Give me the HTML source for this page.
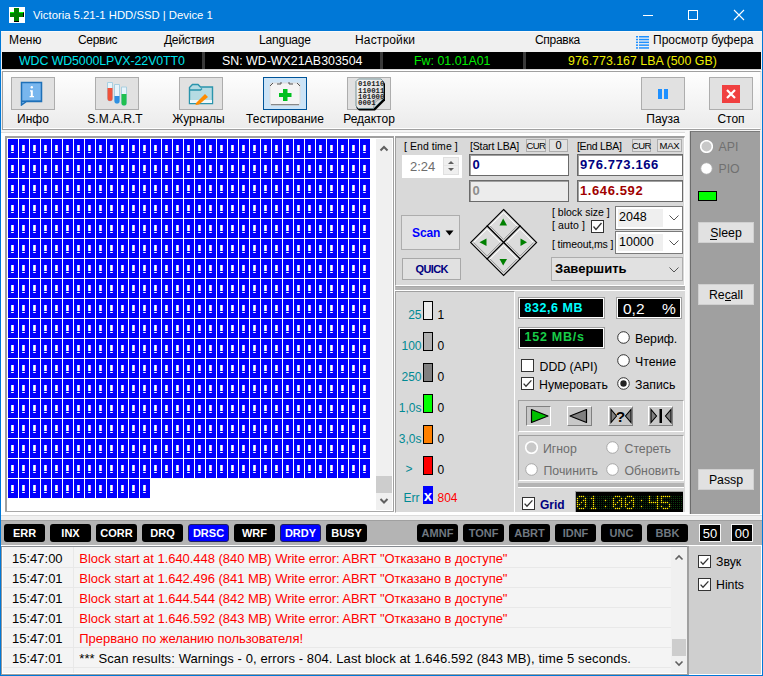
<!DOCTYPE html>
<html><head><meta charset="utf-8">
<style>
*{box-sizing:border-box;margin:0;padding:0}
html,body{width:763px;height:676px;overflow:hidden;background:#f0f0f0;font-family:"Liberation Sans",sans-serif;font-size:12px;color:#000;position:relative}
.a{position:absolute}
svg.a{display:block}
.t{position:absolute;white-space:pre;line-height:1}
.tb{position:absolute;top:77px;width:44px;height:33px;background:#e1e1e1;border:1px solid #adadad}
.btn{position:absolute;background:#e1e1e1;border:1px solid #adadad}
.sb{position:absolute;top:524px;width:41px;height:18px;background:#000;border-radius:3px;color:#fff;font-weight:bold;font-size:11px;line-height:18px;text-align:center}
</style></head><body>

<div class="a" style="left:0px;top:0px;width:763px;height:31px;background:#0078d7"></div>
<svg class="a" style="left:9px;top:7px" width="16" height="16" viewBox="0 0 16 16">
<rect width="16" height="16" fill="#fff"/>
<rect x="5" y="1" width="5" height="14" fill="#008000"/>
<rect x="1" y="5" width="14" height="5" fill="#008000"/>
<rect x="1" y="5" width="4" height="1" fill="#00ff00"/><rect x="10" y="5" width="4" height="1" fill="#00ff00"/>
<rect x="5" y="14" width="5" height="1" fill="#000"/><rect x="14" y="6" width="1" height="4" fill="#000"/>
</svg>
<div class="t" style="left:33px;top:10.43px;font-size:11.3px;color:#fff;">Victoria 5.21-1 HDD/SSD | Device 1</div>
<div class="a" style="left:643px;top:15px;width:10px;height:1px;background:#fff"></div>
<div class="a" style="left:688px;top:10px;width:10px;height:10px;border:1px solid #fff"></div>
<svg class="a" style="left:733px;top:9px" width="12" height="12" viewBox="0 0 12 12"><path d="M1 1L11 11M11 1L1 11" stroke="#fff" stroke-width="1.1"/></svg>
<div class="a" style="left:1px;top:31px;width:761px;height:21px;background:#f0f0f0;border-top:1px solid #fafafa"></div>
<div class="t" style="left:9px;top:33.84px;font-size:12px;">Меню</div>
<div class="t" style="left:78px;top:33.84px;font-size:12px;letter-spacing:-0.3px">Сервис</div>
<div class="t" style="left:164px;top:33.84px;font-size:12px;letter-spacing:-0.3px">Действия</div>
<div class="t" style="left:259px;top:33.84px;font-size:12px;letter-spacing:-0.2px">Language</div>
<div class="t" style="left:355px;top:33.84px;font-size:12px;letter-spacing:0.15px">Настройки</div>
<div class="t" style="left:535px;top:33.84px;font-size:12px;letter-spacing:-0.3px">Справка</div>
<div class="t" style="left:653px;top:33.84px;font-size:12px;">Просмотр буфера</div>
<svg class="a" style="left:636px;top:36px" width="13" height="13" viewBox="0 0 13 13" fill="#1e90ff"><rect x="0" y="0.0" width="2" height="1.5"/><rect x="3" y="0.0" width="10" height="1.5"/><rect x="0" y="2.8" width="2" height="1.5"/><rect x="3" y="2.8" width="10" height="1.5"/><rect x="0" y="5.6" width="2" height="1.5"/><rect x="3" y="5.6" width="10" height="1.5"/><rect x="0" y="8.399999999999999" width="2" height="1.5"/><rect x="3" y="8.399999999999999" width="10" height="1.5"/><rect x="0" y="11.2" width="2" height="1.5"/><rect x="3" y="11.2" width="10" height="1.5"/></svg>
<div class="a" style="left:2px;top:52px;width:759px;height:17px;background:#000"></div>
<div class="a" style="left:202px;top:52px;width:3px;height:17px;background:#3a3a3a"></div>
<div class="a" style="left:380px;top:52px;width:3px;height:17px;background:#3a3a3a"></div>
<div class="a" style="left:523px;top:52px;width:3px;height:17px;background:#3a3a3a"></div>
<div class="a" style="left:1px;top:69px;width:761px;height:1px;background:#d8d8d8"></div>
<div class="a" style="left:1px;top:70px;width:761px;height:1px;background:#fff"></div>
<div class="t" style="left:19px;top:54.50px;font-size:12.4px;color:#00e5ee;letter-spacing:-0.1px">WDC WD5000LPVX-22V0TT0</div>
<div class="t" style="left:222px;top:54.50px;font-size:12.4px;color:#fff;">SN: WD-WX21AB303504</div>
<div class="t" style="left:414px;top:54.50px;font-size:12.4px;color:#00ee00;">Fw: 01.01A01</div>
<div class="t" style="left:568px;top:54.50px;font-size:12.4px;color:#eeee00;">976.773.167 LBA (500 GB)</div>
<div class="a" style="left:2px;top:71px;width:759px;height:59px;border:1px solid #a0a0a0;border-right-color:#e8e8e8;border-bottom-color:#a0a0a0;background:linear-gradient(#fefefe,#ebebeb);box-shadow:inset 0 -1px 0 #fff"></div>
<div class="a" style="left:1px;top:130px;width:761px;height:2px;background:#f4f4f4"></div>
<div class="a" style="left:1px;top:132px;width:761px;height:1px;background:#dcdcdc"></div>
<div class="a" style="left:1px;top:133px;width:761px;height:3px;background:#fff"></div>
<div class="a" style="left:11px;top:77px;width:44px;height:33px;background:#e1e1e1;border:1px solid #adadad"></div>
<div class="a" style="left:95px;top:77px;width:44px;height:33px;background:#e1e1e1;border:1px solid #adadad"></div>
<div class="a" style="left:179px;top:77px;width:44px;height:33px;background:#e1e1e1;border:1px solid #adadad"></div>
<div class="a" style="left:347px;top:77px;width:44px;height:33px;background:#e1e1e1;border:1px solid #adadad"></div>
<div class="a" style="left:641px;top:77px;width:44px;height:33px;background:#e1e1e1;border:1px solid #adadad"></div>
<div class="a" style="left:709px;top:77px;width:44px;height:33px;background:#e1e1e1;border:1px solid #adadad"></div>
<div class="a" style="left:263px;top:77px;width:44px;height:33px;background:#cce4f7;border:1px solid #005499"></div>
<div class="t" style="left:-167px;width:400px;text-align:center;top:113.34px;font-size:12px;">Инфо</div>
<div class="t" style="left:-85px;width:400px;text-align:center;top:113.34px;font-size:12px;">S.M.A.R.T</div>
<div class="t" style="left:-1.5px;width:400px;text-align:center;top:113.34px;font-size:12px;">Журналы</div>
<div class="t" style="left:85px;width:400px;text-align:center;top:113.34px;font-size:12px;">Тестирование</div>
<div class="t" style="left:169px;width:400px;text-align:center;top:113.34px;font-size:12px;">Редактор</div>
<div class="t" style="left:463px;width:400px;text-align:center;top:113.34px;font-size:12px;">Пауза</div>
<div class="t" style="left:531px;width:400px;text-align:center;top:113.34px;font-size:12px;">Стоп</div>
<svg class="a" style="left:20px;top:81px" width="24" height="25" viewBox="0 0 24 25">
<path d="M1.5 1.5H21.5V20.5H6.5L1.5 24Z" fill="#78b6ee" stroke="#1e70b8" stroke-width="1.5"/>
<rect x="1" y="19.5" width="21" height="1.5" fill="#1e70b8"/>
<circle cx="11.8" cy="6.3" r="1.2" fill="#fff"/><path d="M10 9.3H12.8V15H14V16.3H9.6V15H10.8V10.5H10Z" fill="#fff"/>
</svg>
<svg class="a" style="left:105px;top:81px" width="24" height="26" viewBox="0 0 24 26">
<path d="M2.5 1.5H7.5V17.5A2.5 2.5 0 0 1 2.5 17.5Z" fill="#e8f4fb" stroke="#a8cfe0" stroke-width="1"/>
<path d="M2.5 7H7.5V17.5A2.5 2.5 0 0 1 2.5 17.5Z" fill="#f0523a"/>
<path d="M9.5 3.5H14.5V20A2.5 2.5 0 0 1 9.5 20Z" fill="#e8f4fb" stroke="#a8cfe0" stroke-width="1"/>
<path d="M9.5 15H14.5V20A2.5 2.5 0 0 1 9.5 20Z" fill="#2f8fe0"/>
<path d="M16.5 6H21.5V22A2.5 2.5 0 0 1 16.5 22Z" fill="#e8f4fb" stroke="#a8cfe0" stroke-width="1"/>
<path d="M16.5 13H21.5V22A2.5 2.5 0 0 1 16.5 22Z" fill="#20c050"/>
</svg>
<svg class="a" style="left:188px;top:83px" width="26" height="23" viewBox="0 0 26 23">
<path d="M1.5 4.5L4.5 1.5H10L12.5 4H24.5V20.5H1.5Z" fill="#b5dbe3" stroke="#2a94ac" stroke-width="1.4"/>
<path d="M1.5 7H12.5L14 5.5" fill="none" stroke="#2a94ac" stroke-width="1.4"/>
<rect x="2" y="17" width="22" height="3" fill="#eef8fa"/>
<path d="M8 20L17 11L20 14L11 21.5L7.5 22Z" fill="#ff8c00"/>
</svg>
<svg class="a" style="left:269px;top:81px" width="32" height="25" viewBox="0 0 32 25">
<rect x="1" y="2" width="30" height="22" rx="2" fill="#f4f4f4" stroke="#dcdcdc"/>
<path d="M1 5L4 2M28 2L31 5M8 3H12V1M20 1V3H24" stroke="#555" stroke-width="1" fill="none"/>
<rect x="2" y="23" width="28" height="1.2" fill="#888"/>
<rect x="14" y="8" width="4.5" height="12" fill="#00c020"/><rect x="10" y="12" width="12.5" height="4" fill="#00c020"/>
</svg>
<svg class="a" style="left:355px;top:78px" width="32" height="33" viewBox="0 0 32 33">
<defs><linearGradient id="pg" x1="0" y1="0" x2="1" y2="1"><stop offset="0" stop-color="#f6f6f6"/><stop offset="1" stop-color="#d4d4d4"/></linearGradient></defs>
<path d="M4 2.5H27L30 5.5V22.5L20 32.5H4L1.5 30V5Z" fill="#000"/>
<path d="M3.5 1H26L28.5 3.5V20.5L18.5 30.5H3.5L1 28V3.5Z" fill="url(#pg)" stroke="#6a8a90" stroke-width="0.9"/>
<path d="M18.5 30.5C19 26 20 22 28.5 20.5C25 21.5 22 21 20 21.5Z" fill="#c8c8c8" stroke="#888" stroke-width="0.5"/>
<g font-family="Liberation Mono" font-size="7.3" font-weight="bold" fill="#202020"><text x="3" y="8.2">010110</text><text x="3" y="14.6">110011</text><text x="3" y="21">101000</text><text x="3" y="27.4">0001</text></g>
</svg>
<div class="a" style="left:658px;top:89px;width:4px;height:10px;background:#1e90ff"></div>
<div class="a" style="left:664px;top:89px;width:4px;height:10px;background:#1e90ff"></div>
<div class="a" style="left:722px;top:85px;width:18px;height:18px;background:#f04040"></div>
<svg class="a" style="left:722px;top:85px" width="18" height="18" viewBox="0 0 18 18"><path d="M5 5L13 13M13 5L5 13" stroke="#fff" stroke-width="2.2"/></svg>
<div class="a" style="left:1px;top:133px;width:4px;height:379px;background:#fff"></div>
<div class="a" style="left:5px;top:136px;width:389px;height:376px;background:#fff;border-top:2px solid #a0a0a0;border-left:2px solid #a0a0a0"></div>
<div class="a" style="left:393px;top:136px;width:1px;height:376px;background:#a0a0a0"></div>
<div class="a" style="left:5px;top:511px;width:389px;height:1px;background:#a8a8a8"></div>
<svg class="a" style="left:8px;top:139px" width="363" height="360" viewBox="0 0 363 360">
<defs><pattern id="blk" width="11" height="20" patternUnits="userSpaceOnUse">
<rect width="10" height="19" fill="#0000ff"/>
<rect x="3" y="6" width="1" height="6" fill="#9ff"/><rect x="4" y="6" width="1" height="6" fill="#fff"/><rect x="5" y="6" width="1" height="6" fill="#f9f"/>
<rect x="3" y="13" width="1" height="1" fill="#9ff"/><rect x="4" y="13" width="1" height="1" fill="#fff"/><rect x="5" y="13" width="1" height="1" fill="#f9f"/>
</pattern></defs>
<rect width="363" height="340" fill="url(#blk)"/>
<rect y="340" width="143" height="20" fill="url(#blk)"/>
</svg>
<div class="a" style="left:376px;top:139px;width:16px;height:371px;background:#f0f0f0"></div>
<div class="a" style="left:376px;top:476px;width:16px;height:17px;background:#cdcdcd"></div>
<svg class="a" style="left:376px;top:139px" width="16" height="371" viewBox="0 0 16 371"><path d="M4.5 11.5L8 8L11.5 11.5" stroke="#606060" stroke-width="2" fill="none"/><path d="M4.5 360L8 363.5L11.5 360" stroke="#606060" stroke-width="2" fill="none"/></svg>
<div class="a" style="left:395px;top:136px;width:290px;height:150px;background:#d9d9d9;border-top:2px solid #a0a0a0;border-left:1px solid #a0a0a0;border-bottom:1px solid #fff;border-right:1px solid #fff"></div>
<div class="a" style="left:685px;top:131px;width:4px;height:383px;background:#f8f8f8"></div>
<div class="a" style="left:394px;top:136px;width:1px;height:377px;background:#fff"></div>
<div class="t" style="left:404px;top:141.11px;font-size:10.5px;letter-spacing:0.05px">[ End time ]</div>
<div class="a" style="left:402px;top:155px;width:60px;height:23px;background:#fff"></div>
<div class="a" style="left:443px;top:157px;width:16px;height:18px;background:#e6e6e6;border:1px solid #e0e0e0"></div>
<div class="a" style="left:444px;top:158px;width:14px;height:7px;background:#efefef"></div>
<div class="a" style="left:444px;top:166px;width:14px;height:8px;background:#efefef"></div>
<svg class="a" style="left:443px;top:157px" width="16" height="18" viewBox="0 0 16 18"><path d="M5 7H11L8 4Z" fill="#606060"/><path d="M5 11H11L8 14Z" fill="#606060"/></svg>
<div class="t" style="left:410px;top:160.00px;font-size:13px;color:#6d6d6d;">2:24</div>
<div class="t" style="left:470px;top:141.11px;font-size:10.5px;letter-spacing:-0.15px">[Start LBA]</div>
<div class="t" style="left:577px;top:141.11px;font-size:10.5px;letter-spacing:-0.3px">[End LBA]</div>
<div class="a" style="left:526px;top:139px;width:20px;height:13px;background:#e1e1e1;border:1px solid #adadad"></div>
<div class="t" style="left:336.0px;width:400px;text-align:center;top:141.46px;font-size:9.5px;letter-spacing:-0.6px">CUR</div>
<div class="a" style="left:549px;top:139px;width:19px;height:13px;background:#e1e1e1;border:1px solid #adadad"></div>
<div class="t" style="left:358.5px;width:400px;text-align:center;top:140.19px;font-size:11px;">0</div>
<div class="a" style="left:632px;top:139px;width:19px;height:13px;background:#e1e1e1;border:1px solid #adadad"></div>
<div class="t" style="left:441.5px;width:400px;text-align:center;top:141.46px;font-size:9.5px;letter-spacing:-0.6px">CUR</div>
<div class="a" style="left:657px;top:139px;width:25px;height:13px;background:#e1e1e1;border:1px solid #adadad"></div>
<div class="t" style="left:469.5px;width:400px;text-align:center;top:141.46px;font-size:9.5px;letter-spacing:-0.2px">MAX</div>
<div class="a" style="left:469px;top:154px;width:100px;height:22px;background:#fff;border:1px solid #6a6a6a;box-shadow:inset 1px 1px 0 #a0a0a0"></div>
<div class="a" style="left:469px;top:180px;width:100px;height:22px;background:#ececec;border:1px solid #6a6a6a;box-shadow:inset 1px 1px 0 #a0a0a0"></div>
<div class="a" style="left:577px;top:154px;width:106px;height:22px;background:#fff;border:1px solid #6a6a6a;box-shadow:inset 1px 1px 0 #a0a0a0"></div>
<div class="a" style="left:577px;top:180px;width:106px;height:22px;background:#fff;border:1px solid #6a6a6a;box-shadow:inset 1px 1px 0 #a0a0a0"></div>
<div class="t" style="left:472.5px;top:158.00px;font-size:13px;color:#000080;font-weight:700;">0</div>
<div class="t" style="left:472.5px;top:184.00px;font-size:13px;color:#8e8e8e;font-weight:700;">0</div>
<div class="t" style="left:580px;top:158.00px;font-size:13px;color:#000080;font-weight:700;letter-spacing:0.6px">976.773.166</div>
<div class="t" style="left:580px;top:184.00px;font-size:13px;color:#a00000;font-weight:700;letter-spacing:0.6px">1.646.592</div>
<div class="a" style="left:401px;top:215px;width:59px;height:35px;background:#e1e1e1;border:1px solid #adadad"></div>
<div class="t" style="left:412px;top:227.44px;font-size:12px;color:#0000ff;font-weight:700;letter-spacing:-0.1px">Scan</div>
<svg class="a" style="left:445px;top:230px" width="9" height="6" viewBox="0 0 9 6"><path d="M0.5 0.5H8.5L4.5 5.5Z" fill="#000"/></svg>
<div class="a" style="left:402px;top:258px;width:59px;height:22px;background:#e1e1e1;border:1px solid #a8a8a8"></div>
<div class="t" style="left:415.5px;top:263.69px;font-size:11px;color:#000080;font-weight:700;letter-spacing:-0.6px">QUICK</div>
<svg class="a" style="left:0;top:0" width="763" height="676" viewBox="0 0 763 676"><path d="M503.6 209.5L520.1 226.0L503.6 242.5L487.1 226.0Z" fill="#dcdcdc" stroke="#000" stroke-width="1.1"/><path d="M490.1 226.0L503.6 212.5L517.1 226.0" fill="none" stroke="#fff" stroke-width="1"/><path d="M490.1 226.0L503.6 239.5L517.1 226.0" fill="none" stroke="#999" stroke-width="1"/><path d="M487.1 226.0L503.6 242.5L487.1 259.0L470.6 242.5Z" fill="#dcdcdc" stroke="#000" stroke-width="1.1"/><path d="M473.6 242.5L487.1 229.0L500.6 242.5" fill="none" stroke="#fff" stroke-width="1"/><path d="M473.6 242.5L487.1 256.0L500.6 242.5" fill="none" stroke="#999" stroke-width="1"/><path d="M520.1 226.0L536.6 242.5L520.1 259.0L503.6 242.5Z" fill="#dcdcdc" stroke="#000" stroke-width="1.1"/><path d="M506.6 242.5L520.1 229.0L533.6 242.5" fill="none" stroke="#fff" stroke-width="1"/><path d="M506.6 242.5L520.1 256.0L533.6 242.5" fill="none" stroke="#999" stroke-width="1"/><path d="M503.6 242.5L520.1 259.0L503.6 275.5L487.1 259.0Z" fill="#dcdcdc" stroke="#000" stroke-width="1.1"/><path d="M490.1 259.0L503.6 245.5L517.1 259.0" fill="none" stroke="#fff" stroke-width="1"/><path d="M490.1 259.0L503.6 272.5L517.1 259.0" fill="none" stroke="#999" stroke-width="1"/><path d="M499.5 225.5H507L503.2 218.5Z" fill="#008000"/><path d="M486.5 238.5V246L479.5 242.2Z" fill="#008000"/><path d="M520.5 238.5V246L527 242.2Z" fill="#008000"/><path d="M499.5 259H507L503.2 265.5Z" fill="#008000"/></svg>
<div class="t" style="left:552px;top:206.61px;font-size:10.5px;letter-spacing:0px">[ block size ]</div>
<div class="t" style="left:552px;top:220.11px;font-size:10.5px;letter-spacing:0.1px">[ auto ]</div>
<div class="t" style="left:552px;top:239.11px;font-size:10.5px;letter-spacing:-0.12px">[ timeout,ms ]</div>
<div class="a" style="left:591px;top:220px;width:13px;height:13px;background:#fff;border:1px solid #333"></div>
<svg class="a" style="left:591px;top:220px" width="13" height="13" viewBox="0 0 13 13"><path d="M2.5 6.5L5 9.5L10.5 3" fill="none" stroke="#333" stroke-width="1.3"/></svg>
<div class="a" style="left:615px;top:206px;width:68px;height:24px;background:#fff;border:1px solid #7a7a7a"></div>
<div class="a" style="left:618px;top:209px;width:45px;height:18px;background:#efefef"></div>
<div class="t" style="left:619px;top:211.42px;font-size:12.5px;">2048</div>
<svg class="a" style="left:669px;top:215px" width="10" height="6" viewBox="0 0 10 6"><path d="M0.5 0.5L5 5L9.5 0.5" fill="none" stroke="#555" stroke-width="1"/></svg>
<div class="a" style="left:615px;top:231px;width:68px;height:23px;background:#fff;border:1px solid #7a7a7a"></div>
<div class="a" style="left:618px;top:234px;width:45px;height:17px;background:#efefef"></div>
<div class="t" style="left:619px;top:236.42px;font-size:12.5px;">10000</div>
<svg class="a" style="left:669px;top:240px" width="10" height="6" viewBox="0 0 10 6"><path d="M0.5 0.5L5 5L9.5 0.5" fill="none" stroke="#555" stroke-width="1"/></svg>
<div class="a" style="left:551px;top:257px;width:132px;height:24px;background:#e1e1e1;border:1px solid #adadad"></div>
<div class="t" style="left:555px;top:262.10px;font-size:13px;font-weight:700;">Завершить</div>
<svg class="a" style="left:669px;top:267px" width="10" height="6" viewBox="0 0 10 6"><path d="M0.5 0.5L5 5L9.5 0.5" fill="none" stroke="#555" stroke-width="1"/></svg>
<div class="a" style="left:395px;top:286px;width:290px;height:4px;background:#b4b4b4;border-top:1px solid #a8a8a8"></div>
<div class="a" style="left:395px;top:290px;width:290px;height:1px;background:#fff"></div>
<div class="a" style="left:1px;top:512px;width:761px;height:3px;background:#fff"></div>
<div class="a" style="left:1px;top:515px;width:761px;height:1px;background:#dcdcdc"></div>
<div class="a" style="left:1px;top:516px;width:761px;height:4px;background:#f0f0f0"></div>
<div class="a" style="left:395px;top:291px;width:120px;height:222px;background:#d9d9d9;border-top:1px solid #a0a0a0;border-left:1px solid #a0a0a0;border-right:1px solid #fff;border-bottom:1px solid #fff"></div>
<div class="a" style="left:423px;top:301px;width:10px;height:19px;background:#ececec;border:1px solid #000"></div>
<div class="t" style="right:341.5px;top:308.84px;font-size:12px;color:#008a94;">25</div>
<div class="t" style="left:437.5px;top:308.84px;font-size:12px;">1</div>
<div class="a" style="left:423px;top:332px;width:10px;height:19px;background:#b0b0b0;border:1px solid #000"></div>
<div class="t" style="right:341.5px;top:339.84px;font-size:12px;color:#008a94;">100</div>
<div class="t" style="left:437.5px;top:339.84px;font-size:12px;">0</div>
<div class="a" style="left:423px;top:363px;width:10px;height:19px;background:#808080;border:1px solid #000"></div>
<div class="t" style="right:341.5px;top:370.84px;font-size:12px;color:#008a94;">250</div>
<div class="t" style="left:437.5px;top:370.84px;font-size:12px;">0</div>
<div class="a" style="left:423px;top:394px;width:10px;height:19px;background:#00ff00;border:1px solid #000"></div>
<div class="t" style="right:341.5px;top:401.84px;font-size:12px;color:#008a94;">1,0s</div>
<div class="t" style="left:437.5px;top:401.84px;font-size:12px;">0</div>
<div class="a" style="left:423px;top:425px;width:10px;height:19px;background:#ff8000;border:1px solid #000"></div>
<div class="t" style="right:341.5px;top:432.84px;font-size:12px;color:#008a94;">3,0s</div>
<div class="t" style="left:437.5px;top:432.84px;font-size:12px;">0</div>
<div class="a" style="left:423px;top:456px;width:10px;height:19px;background:#ff0000;border:1px solid #000"></div>
<div class="t" style="right:350.5px;top:462.84px;font-size:12px;color:#008a94;">&gt;</div>
<div class="t" style="left:437.5px;top:463.84px;font-size:12px;">0</div>
<div class="a" style="left:423px;top:486px;width:10px;height:18px;background:#0000ff"></div>
<div class="t" style="left:228px;width:400px;text-align:center;top:488.30px;font-size:15px;color:#fff;font-weight:700;">x</div>
<div class="t" style="right:343.5px;top:491.84px;font-size:12px;color:#008a94;">Err</div>
<div class="t" style="left:437.5px;top:491.84px;font-size:12px;color:#ff0000;">804</div>
<div class="a" style="left:515px;top:291px;width:170px;height:222px;background:#d9d9d9;border-bottom:1px solid #fff"></div>
<div class="a" style="left:518px;top:297px;width:87px;height:22px;background:#000;border:1px solid #a0a0a0;box-shadow:inset 0 0 0 1px #fff"></div>
<div class="a" style="left:616px;top:297px;width:66px;height:22px;background:#000;border:1px solid #a0a0a0;box-shadow:inset 0 0 0 1px #fff"></div>
<div class="a" style="left:518px;top:327px;width:87px;height:22px;background:#000;border:1px solid #a0a0a0;box-shadow:inset 0 0 0 1px #fff"></div>
<div class="t" style="left:524.5px;top:302.02px;font-size:12.5px;color:#00ffff;font-weight:700;letter-spacing:0.55px">832,6 MB</div>
<div class="t" style="left:623px;top:300.88px;font-size:15.5px;color:#fff;">0,2</div>
<div class="t" style="left:662px;top:300.88px;font-size:15.5px;color:#fff;">%</div>
<div class="t" style="left:524.5px;top:331.22px;font-size:12.5px;color:#18cc48;font-weight:700;letter-spacing:0.75px">152 MB/s</div>
<svg class="a" style="left:617px;top:331px" width="13" height="13" viewBox="0 0 13 13"><circle cx="6.5" cy="6.5" r="5.8" fill="#fff" stroke="#333" stroke-width="1"/></svg>
<svg class="a" style="left:617px;top:354px" width="13" height="13" viewBox="0 0 13 13"><circle cx="6.5" cy="6.5" r="5.8" fill="#fff" stroke="#333" stroke-width="1"/></svg>
<svg class="a" style="left:617px;top:377px" width="13" height="13" viewBox="0 0 13 13"><circle cx="6.5" cy="6.5" r="5.8" fill="#fff" stroke="#333" stroke-width="1"/><circle cx="6.5" cy="6.5" r="3.2" fill="#222"/></svg>
<div class="t" style="left:635px;top:333.09px;font-size:12.3px;">Вериф.</div>
<div class="t" style="left:635px;top:355.89px;font-size:12.3px;">Чтение</div>
<div class="t" style="left:635px;top:378.79px;font-size:12.3px;">Запись</div>
<svg class="a" style="left:521px;top:359px" width="13" height="13" viewBox="0 0 13 13"><rect x="0.5" y="0.5" width="12" height="12" fill="#fff" stroke="#333"/></svg>
<svg class="a" style="left:521px;top:377px" width="13" height="13" viewBox="0 0 13 13"><rect x="0.5" y="0.5" width="12" height="12" fill="#fff" stroke="#333"/><path d="M2.6 6.6L5 9.2L10.4 3.4" fill="none" stroke="#333" stroke-width="1.3"/></svg>
<div class="t" style="left:539.5px;top:360.59px;font-size:12.3px;">DDD (API)</div>
<div class="t" style="left:539px;top:378.79px;font-size:12.3px;">Нумеровать</div>
<div class="a" style="left:518px;top:400px;width:166px;height:32px;background:#d4d4d4;border-top:1px solid #a0a0a0;border-left:1px solid #a0a0a0;border-bottom:1px solid #fff;border-right:1px solid #fff"></div>
<div class="a" style="left:526px;top:406px;width:25px;height:20px;background:#c8c8c8;border-top:1px solid #808080;border-left:1px solid #808080;border-bottom:1px solid #fff;border-right:1px solid #fff"></div>
<div class="a" style="left:567px;top:406px;width:25px;height:20px;background:#c8c8c8;border-top:1px solid #fff;border-left:1px solid #fff;border-bottom:1px solid #808080;border-right:1px solid #808080"></div>
<div class="a" style="left:608px;top:406px;width:25px;height:20px;background:#c8c8c8;border-top:1px solid #fff;border-left:1px solid #fff;border-bottom:1px solid #808080;border-right:1px solid #808080"></div>
<div class="a" style="left:648px;top:406px;width:25px;height:20px;background:#c8c8c8;border-top:1px solid #fff;border-left:1px solid #fff;border-bottom:1px solid #808080;border-right:1px solid #808080"></div>
<svg class="a" style="left:0;top:0" width="763" height="676" viewBox="0 0 763 676"><path d="M531.5 409.5V422.5L548 416Z" fill="#00c000" stroke="#000" stroke-width="1.2" stroke-linejoin="round"/><path d="M586.5 409.5V422.5L570 416Z" fill="#808080" stroke="#000" stroke-width="1.2" stroke-linejoin="round"/><path d="M611 409.5V422.5L616.5 416Z" fill="#808080" stroke="#000" stroke-width="1.1"/><path d="M631 409.5V422.5L625.5 416Z" fill="#808080" stroke="#000" stroke-width="1.1"/><path d="M651 409.5V422.5L656.5 416Z" fill="#808080" stroke="#000" stroke-width="1.1"/><path d="M671 409.5V422.5L665.5 416Z" fill="#808080" stroke="#000" stroke-width="1.1"/><rect x="659.5" y="409" width="2.5" height="14" fill="#000"/></svg>
<div class="t" style="left:420.5px;width:400px;text-align:center;top:408.68px;font-size:15.5px;font-weight:700;">?</div>
<div class="a" style="left:518px;top:435px;width:166px;height:46px;background:#d4d4d4;border-top:1px solid #a0a0a0;border-left:1px solid #a0a0a0;border-bottom:1px solid #fff;border-right:1px solid #fff"></div>
<svg class="a" style="left:525px;top:441px" width="13" height="13" viewBox="0 0 13 13"><circle cx="6.5" cy="6.5" r="5.8" fill="#c8c8c8" stroke="#fff" stroke-width="1.6"/></svg>
<svg class="a" style="left:606px;top:441px" width="13" height="13" viewBox="0 0 13 13"><circle cx="6.5" cy="6.5" r="5.8" fill="#fff" stroke="#a8a8a8" stroke-width="1"/></svg>
<svg class="a" style="left:525px;top:463px" width="13" height="13" viewBox="0 0 13 13"><circle cx="6.5" cy="6.5" r="5.8" fill="#fff" stroke="#a8a8a8" stroke-width="1"/></svg>
<svg class="a" style="left:606px;top:463px" width="13" height="13" viewBox="0 0 13 13"><circle cx="6.5" cy="6.5" r="5.8" fill="#fff" stroke="#a8a8a8" stroke-width="1"/></svg>
<div class="t" style="left:543px;top:443.09px;font-size:12.3px;color:#6d6d6d;">Игнор</div>
<div class="t" style="left:624.5px;top:443.09px;font-size:12.3px;color:#6d6d6d;">Стереть</div>
<div class="t" style="left:543.5px;top:464.59px;font-size:12.3px;color:#6d6d6d;">Починить</div>
<div class="t" style="left:624.5px;top:464.59px;font-size:12.3px;color:#6d6d6d;">Обновить</div>
<div class="a" style="left:518px;top:483px;width:166px;height:4px;background:#b4b4b4"></div>
<div class="a" style="left:518px;top:487px;width:166px;height:1px;background:#fff"></div>
<svg class="a" style="left:522px;top:497px" width="13" height="13" viewBox="0 0 13 13"><rect x="0.5" y="0.5" width="12" height="12" fill="#fff" stroke="#333"/><path d="M2.6 6.6L5 9.2L10.4 3.4" fill="none" stroke="#333" stroke-width="1.3"/></svg>
<div class="t" style="left:540px;top:499.34px;font-size:12px;color:#000080;font-weight:700;">Grid</div>
<div class="a" style="left:575px;top:491px;width:108px;height:21px;background:#000;border-top:1px solid #a0a0a0;border-left:1px solid #a0a0a0"></div>
<svg class="a" style="left:575px;top:491px" width="108" height="21" viewBox="575 491 108 21"><defs><pattern id="ld" x="577" y="496" width="2" height="2" patternUnits="userSpaceOnUse"><rect width="1" height="1" fill="#0c3a0c"/></pattern></defs><rect x="577" y="496" width="105" height="13" fill="url(#ld)"/><g fill="#ffee00"><rect x="578.85" y="495.85" width="1.3" height="1.3"/><rect x="580.85" y="495.85" width="1.3" height="1.3"/><rect x="582.85" y="495.85" width="1.3" height="1.3"/><rect x="576.85" y="497.85" width="1.3" height="1.3"/><rect x="584.85" y="497.85" width="1.3" height="1.3"/><rect x="576.85" y="499.85" width="1.3" height="1.3"/><rect x="582.85" y="499.85" width="1.3" height="1.3"/><rect x="584.85" y="499.85" width="1.3" height="1.3"/><rect x="576.85" y="501.85" width="1.3" height="1.3"/><rect x="580.85" y="501.85" width="1.3" height="1.3"/><rect x="584.85" y="501.85" width="1.3" height="1.3"/><rect x="576.85" y="503.85" width="1.3" height="1.3"/><rect x="578.85" y="503.85" width="1.3" height="1.3"/><rect x="584.85" y="503.85" width="1.3" height="1.3"/><rect x="576.85" y="505.85" width="1.3" height="1.3"/><rect x="584.85" y="505.85" width="1.3" height="1.3"/><rect x="578.85" y="507.85" width="1.3" height="1.3"/><rect x="580.85" y="507.85" width="1.3" height="1.3"/><rect x="582.85" y="507.85" width="1.3" height="1.3"/><rect x="592.85" y="495.85" width="1.3" height="1.3"/><rect x="590.85" y="497.85" width="1.3" height="1.3"/><rect x="592.85" y="497.85" width="1.3" height="1.3"/><rect x="592.85" y="499.85" width="1.3" height="1.3"/><rect x="592.85" y="501.85" width="1.3" height="1.3"/><rect x="592.85" y="503.85" width="1.3" height="1.3"/><rect x="592.85" y="505.85" width="1.3" height="1.3"/><rect x="590.85" y="507.85" width="1.3" height="1.3"/><rect x="592.85" y="507.85" width="1.3" height="1.3"/><rect x="594.85" y="507.85" width="1.3" height="1.3"/><rect x="604.85" y="499.85" width="1.3" height="1.3"/><rect x="604.85" y="505.85" width="1.3" height="1.3"/><rect x="614.85" y="495.85" width="1.3" height="1.3"/><rect x="616.85" y="495.85" width="1.3" height="1.3"/><rect x="618.85" y="495.85" width="1.3" height="1.3"/><rect x="612.85" y="497.85" width="1.3" height="1.3"/><rect x="620.85" y="497.85" width="1.3" height="1.3"/><rect x="612.85" y="499.85" width="1.3" height="1.3"/><rect x="618.85" y="499.85" width="1.3" height="1.3"/><rect x="620.85" y="499.85" width="1.3" height="1.3"/><rect x="612.85" y="501.85" width="1.3" height="1.3"/><rect x="616.85" y="501.85" width="1.3" height="1.3"/><rect x="620.85" y="501.85" width="1.3" height="1.3"/><rect x="612.85" y="503.85" width="1.3" height="1.3"/><rect x="614.85" y="503.85" width="1.3" height="1.3"/><rect x="620.85" y="503.85" width="1.3" height="1.3"/><rect x="612.85" y="505.85" width="1.3" height="1.3"/><rect x="620.85" y="505.85" width="1.3" height="1.3"/><rect x="614.85" y="507.85" width="1.3" height="1.3"/><rect x="616.85" y="507.85" width="1.3" height="1.3"/><rect x="618.85" y="507.85" width="1.3" height="1.3"/><rect x="626.85" y="495.85" width="1.3" height="1.3"/><rect x="628.85" y="495.85" width="1.3" height="1.3"/><rect x="630.85" y="495.85" width="1.3" height="1.3"/><rect x="624.85" y="497.85" width="1.3" height="1.3"/><rect x="632.85" y="497.85" width="1.3" height="1.3"/><rect x="624.85" y="499.85" width="1.3" height="1.3"/><rect x="630.85" y="499.85" width="1.3" height="1.3"/><rect x="632.85" y="499.85" width="1.3" height="1.3"/><rect x="624.85" y="501.85" width="1.3" height="1.3"/><rect x="628.85" y="501.85" width="1.3" height="1.3"/><rect x="632.85" y="501.85" width="1.3" height="1.3"/><rect x="624.85" y="503.85" width="1.3" height="1.3"/><rect x="626.85" y="503.85" width="1.3" height="1.3"/><rect x="632.85" y="503.85" width="1.3" height="1.3"/><rect x="624.85" y="505.85" width="1.3" height="1.3"/><rect x="632.85" y="505.85" width="1.3" height="1.3"/><rect x="626.85" y="507.85" width="1.3" height="1.3"/><rect x="628.85" y="507.85" width="1.3" height="1.3"/><rect x="630.85" y="507.85" width="1.3" height="1.3"/><rect x="640.85" y="499.85" width="1.3" height="1.3"/><rect x="640.85" y="505.85" width="1.3" height="1.3"/><rect x="648.85" y="495.85" width="1.3" height="1.3"/><rect x="656.85" y="495.85" width="1.3" height="1.3"/><rect x="648.85" y="497.85" width="1.3" height="1.3"/><rect x="656.85" y="497.85" width="1.3" height="1.3"/><rect x="648.85" y="499.85" width="1.3" height="1.3"/><rect x="656.85" y="499.85" width="1.3" height="1.3"/><rect x="648.85" y="501.85" width="1.3" height="1.3"/><rect x="650.85" y="501.85" width="1.3" height="1.3"/><rect x="652.85" y="501.85" width="1.3" height="1.3"/><rect x="654.85" y="501.85" width="1.3" height="1.3"/><rect x="656.85" y="501.85" width="1.3" height="1.3"/><rect x="656.85" y="503.85" width="1.3" height="1.3"/><rect x="656.85" y="505.85" width="1.3" height="1.3"/><rect x="656.85" y="507.85" width="1.3" height="1.3"/><rect x="660.85" y="495.85" width="1.3" height="1.3"/><rect x="662.85" y="495.85" width="1.3" height="1.3"/><rect x="664.85" y="495.85" width="1.3" height="1.3"/><rect x="666.85" y="495.85" width="1.3" height="1.3"/><rect x="668.85" y="495.85" width="1.3" height="1.3"/><rect x="660.85" y="497.85" width="1.3" height="1.3"/><rect x="660.85" y="499.85" width="1.3" height="1.3"/><rect x="660.85" y="501.85" width="1.3" height="1.3"/><rect x="662.85" y="501.85" width="1.3" height="1.3"/><rect x="664.85" y="501.85" width="1.3" height="1.3"/><rect x="666.85" y="501.85" width="1.3" height="1.3"/><rect x="668.85" y="503.85" width="1.3" height="1.3"/><rect x="660.85" y="505.85" width="1.3" height="1.3"/><rect x="668.85" y="505.85" width="1.3" height="1.3"/><rect x="662.85" y="507.85" width="1.3" height="1.3"/><rect x="664.85" y="507.85" width="1.3" height="1.3"/><rect x="666.85" y="507.85" width="1.3" height="1.3"/></g></svg>
<div class="a" style="left:689px;top:131px;width:1px;height:383px;background:#e0e0e0"></div>
<div class="a" style="left:690px;top:131px;width:71px;height:383px;background:#a0a0a0;border-left:1px solid #6d6d6d;border-top:1px solid #7a7a7a"></div>
<div class="a" style="left:760px;top:131px;width:2px;height:383px;background:#f0f0f0"></div>
<svg class="a" style="left:700px;top:140px" width="13" height="13" viewBox="0 0 13 13"><circle cx="6.5" cy="6.5" r="5.8" fill="#c8c8c8" stroke="#fff" stroke-width="1.6"/></svg>
<svg class="a" style="left:700px;top:162px" width="13" height="13" viewBox="0 0 13 13"><circle cx="6.5" cy="6.5" r="5.8" fill="#fff" stroke="#a8a8a8" stroke-width="1"/></svg>
<div class="t" style="left:718.5px;top:141.09px;font-size:12.3px;color:#707070;">API</div>
<div class="t" style="left:718.5px;top:162.59px;font-size:12.3px;color:#707070;">PIO</div>
<div class="a" style="left:698px;top:191px;width:19px;height:10px;background:#00ff00;border:1px solid #000"></div>
<div class="a" style="left:698px;top:222px;width:56px;height:21px;background:#e1e1e1;border:1px solid #d0d0d0"></div>
<div class="t" style="left:526px;width:400px;text-align:center;top:226.59px;font-size:12.3px;">Sleep</div>
<div class="a" style="left:698px;top:284px;width:56px;height:21px;background:#e1e1e1;border:1px solid #d0d0d0"></div>
<div class="t" style="left:526px;width:400px;text-align:center;top:288.59px;font-size:12.3px;">Recall</div>
<div class="a" style="left:698px;top:469px;width:56px;height:21px;background:#e1e1e1;border:1px solid #d0d0d0"></div>
<div class="t" style="left:526px;width:400px;text-align:center;top:473.59px;font-size:12.3px;">Passp</div>
<div class="a" style="left:709.5px;top:238.5px;width:7.5px;height:1px;background:#000"></div>
<div class="a" style="left:725px;top:299.5px;width:6px;height:1px;background:#000"></div>
<div class="a" style="left:1px;top:520px;width:761px;height:25px;background:#b4b4b4;border-top:1px solid #a0a0a0"></div>
<div class="a" style="left:1px;top:545px;width:761px;height:1px;background:#fff"></div>
<div class="sb" style="left:4px;background:#000;">ERR</div>
<div class="sb" style="left:50px;background:#000;">INX</div>
<div class="sb" style="left:96px;background:#000;">CORR</div>
<div class="sb" style="left:142px;background:#000;">DRQ</div>
<div class="sb" style="left:188px;background:#0000ff;border:1px solid #202060;line-height:16px;">DRSC</div>
<div class="sb" style="left:234px;background:#000;">WRF</div>
<div class="sb" style="left:280px;background:#0000ff;border:1px solid #202060;line-height:16px;">DRDY</div>
<div class="sb" style="left:326px;background:#000;">BUSY</div>
<div class="sb" style="left:417px;color:#707880">AMNF</div>
<div class="sb" style="left:463px;color:#707880">TONF</div>
<div class="sb" style="left:509px;color:#707880">ABRT</div>
<div class="sb" style="left:555px;color:#707880">IDNF</div>
<div class="sb" style="left:601px;color:#707880">UNC</div>
<div class="sb" style="left:647px;color:#707880">BBK</div>
<div class="a" style="left:699px;top:524px;width:22px;height:18px;background:#000;border:1px solid #f4f4f4"></div>
<div class="t" style="left:510px;width:400px;text-align:center;top:527.00px;font-size:13px;color:#fff;">50</div>
<div class="a" style="left:731px;top:524px;width:22px;height:18px;background:#000;border:1px solid #f4f4f4"></div>
<div class="t" style="left:542px;width:400px;text-align:center;top:527.00px;font-size:13px;color:#fff;">00</div>
<div class="a" style="left:1px;top:546px;width:688px;height:129px;background:#f4f4f4;border-top:1px solid #868a90;border-left:1px solid #999;box-shadow:inset 1px 0 0 #fff"></div>
<div class="a" style="left:2px;top:673px;width:687px;height:1px;background:#fff"></div>
<div class="a" style="left:1px;top:674px;width:688px;height:1px;background:#a0a0a0"></div>
<div class="a" style="left:3px;top:567px;width:668px;height:1px;background:#e8e8e8"></div>
<div class="a" style="left:3px;top:587px;width:668px;height:1px;background:#e8e8e8"></div>
<div class="a" style="left:3px;top:607px;width:668px;height:1px;background:#e8e8e8"></div>
<div class="a" style="left:3px;top:627px;width:668px;height:1px;background:#e8e8e8"></div>
<div class="a" style="left:3px;top:647px;width:668px;height:1px;background:#e8e8e8"></div>
<div class="a" style="left:3px;top:667px;width:668px;height:1px;background:#e8e8e8"></div>
<div class="a" style="left:73px;top:547px;width:1px;height:126px;background:#e8e8e8"></div>
<div class="t" style="left:12px;top:552.00px;font-size:13px;">15:47:00</div>
<div class="t" style="left:79.3px;top:552.00px;font-size:13px;color:#ff0000;letter-spacing:-0.04px">Block start at 1.640.448 (840 MB) Write error: ABRT &quot;Отказано в доступе&quot;</div>
<div class="t" style="left:12px;top:572.00px;font-size:13px;">15:47:01</div>
<div class="t" style="left:79.3px;top:572.00px;font-size:13px;color:#ff0000;letter-spacing:-0.04px">Block start at 1.642.496 (841 MB) Write error: ABRT &quot;Отказано в доступе&quot;</div>
<div class="t" style="left:12px;top:592.00px;font-size:13px;">15:47:01</div>
<div class="t" style="left:79.3px;top:592.00px;font-size:13px;color:#ff0000;letter-spacing:-0.04px">Block start at 1.644.544 (842 MB) Write error: ABRT &quot;Отказано в доступе&quot;</div>
<div class="t" style="left:12px;top:612.00px;font-size:13px;">15:47:01</div>
<div class="t" style="left:79.3px;top:612.00px;font-size:13px;color:#ff0000;letter-spacing:-0.04px">Block start at 1.646.592 (843 MB) Write error: ABRT &quot;Отказано в доступе&quot;</div>
<div class="t" style="left:12px;top:632.00px;font-size:13px;">15:47:01</div>
<div class="t" style="left:79.3px;top:632.00px;font-size:13px;color:#ff0000;letter-spacing:-0.04px">Прервано по желанию пользователя!</div>
<div class="t" style="left:12px;top:652.00px;font-size:13px;">15:47:01</div>
<div class="t" style="left:79.3px;top:652.00px;font-size:13px;letter-spacing:0.1px">*** Scan results: Warnings - 0, errors - 804. Last block at 1.646.592 (843 MB), time 5 seconds.</div>
<div class="a" style="left:671px;top:547px;width:16px;height:126px;background:#f0f0f0"></div>
<div class="a" style="left:672px;top:639px;width:14px;height:17px;background:#cdcdcd"></div>
<svg class="a" style="left:671px;top:547px" width="16" height="126" viewBox="0 0 16 126"><path d="M4.5 12.5L8 9L11.5 12.5" stroke="#606060" stroke-width="1.6" fill="none"/><path d="M4.5 114.5L8 118L11.5 114.5" stroke="#606060" stroke-width="1.6" fill="none"/></svg>
<div class="a" style="left:687px;top:546px;width:2px;height:129px;background:#a0a0a0"></div>
<div class="a" style="left:689px;top:546px;width:73px;height:129px;background:#cfcfcf;border-right:1px solid #fff;border-bottom:1px solid #fff"></div>
<svg class="a" style="left:698px;top:555px" width="13" height="13" viewBox="0 0 13 13"><rect x="0.5" y="0.5" width="12" height="12" fill="#fff" stroke="#333"/><path d="M2.6 6.6L5 9.2L10.4 3.4" fill="none" stroke="#333" stroke-width="1.3"/></svg>
<svg class="a" style="left:698px;top:578px" width="13" height="13" viewBox="0 0 13 13"><rect x="0.5" y="0.5" width="12" height="12" fill="#fff" stroke="#333"/><path d="M2.6 6.6L5 9.2L10.4 3.4" fill="none" stroke="#333" stroke-width="1.3"/></svg>
<div class="t" style="left:716px;top:555.89px;font-size:12.3px;">Звук</div>
<div class="t" style="left:716px;top:578.89px;font-size:12.3px;">Hints</div>
<div class="a" style="left:0px;top:0px;width:1px;height:676px;background:#0078d7"></div>
<div class="a" style="left:762px;top:0px;width:1px;height:676px;background:#0078d7"></div>
<div class="a" style="left:0px;top:675px;width:763px;height:1px;background:#0078d7"></div>
</body></html>
